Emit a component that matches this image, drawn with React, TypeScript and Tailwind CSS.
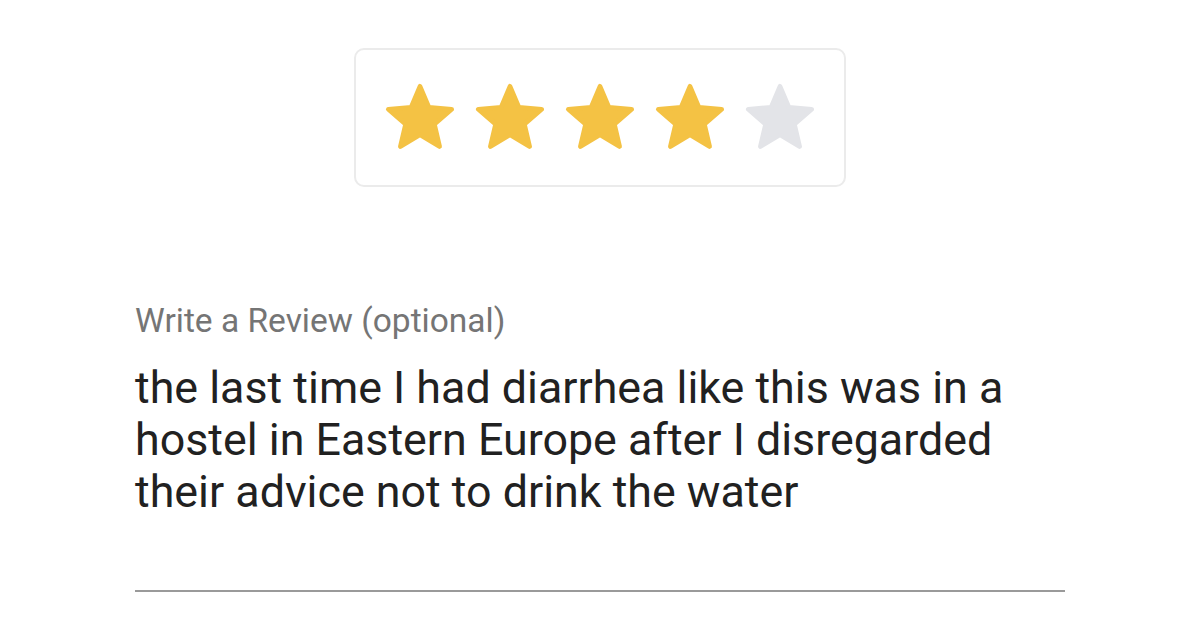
import React from 'react';

const StarIcon: React.FC<{ filled: boolean }> = ({ filled }) => (
  <svg
    viewBox="0 0 24 24"
    className={`w-[76px] h-[76px] ${filled ? 'text-[#f4c244]' : 'text-[#e3e4e8]'}`}
    fill="currentColor"
    stroke="currentColor"
    strokeWidth={1.5}
    strokeLinejoin="round"
  >
    <path d="M12 2l2.81 6.63 7.19.61-5.46 4.73L18.18 21 12 17.27 5.82 21l1.64-7.03L2 9.24l7.19-.61z" />
  </svg>
);

export default function App() {
  const rating = 4;

  return (
    <div className="w-[1200px] h-[640px] bg-white overflow-hidden font-['Roboto',sans-serif]">
      {/* Star rating card */}
      <div className="pt-[48px] flex justify-center">
        <div className="w-[492px] h-[139px] border-2 border-[#ebebeb] rounded-[10px] flex items-center justify-center gap-[14px]">
          {[1, 2, 3, 4, 5].map((n) => (
            <StarIcon key={n} filled={n <= rating} />
          ))}
        </div>
      </div>

      {/* Review field */}
      <div className="ml-[135px] w-[930px] mt-[114px]">
        <label className="block text-[33.5px] leading-[40px] text-[#757575]">
          Write a Review (optional)
        </label>
        <p className="mt-[21px] text-[44.8px] leading-[52px] text-[#212121]">
          the last time I had diarrhea like this was in a<br />
          hostel in Eastern Europe after I disregarded<br />
          their advice not to drink the water
        </p>
        <div className="mt-[72px] h-[2px] bg-[#9a9a9a]" />
      </div>
    </div>
  );
}
